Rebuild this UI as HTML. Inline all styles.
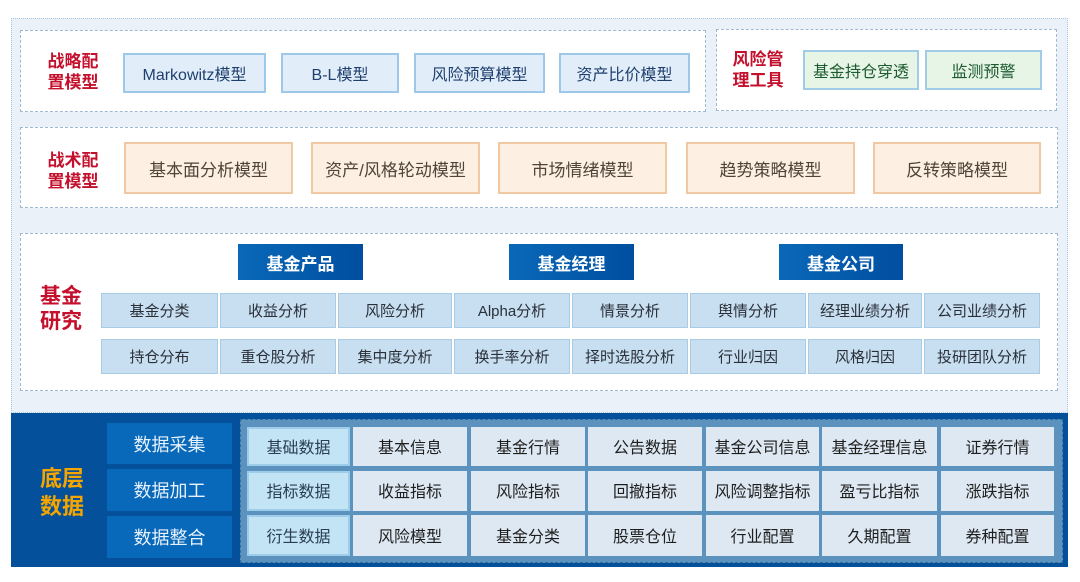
<!DOCTYPE html>
<html><head><meta charset="utf-8"><style>
*{box-sizing:border-box;margin:0;padding:0}
body{width:1080px;height:582px;background:#fff;position:relative;overflow:hidden;font-family:"Liberation Sans","Noto Sans CJK SC",sans-serif}
.a{position:absolute;display:flex;align-items:center;justify-content:center;text-align:center;white-space:nowrap}
.panel{position:absolute;left:11px;top:18px;width:1057px;height:395px;background:#eaf1f8;border:1px dotted #a9c6e0}
.box{position:absolute;background:#fff;border:1px dashed #9fb8d2}
.lbl{color:#c4102c;font-weight:bold;font-size:17px;line-height:21px}
.b1{background:#e1eef9;border:2px solid #9dc8ea;color:#1f3f6e;font-size:16px}
.g{background:#e6f5e6;border:2px solid #a0cce8;color:#1d5a30;font-size:16px}
.o{background:#fdf0e2;border:2px solid #f0c9a2;color:#4e443a;font-size:17px}
.h{background:linear-gradient(90deg,#0a68b8,#004ea0);color:#fff;font-weight:bold;font-size:17px}
.c{background:#c7dff1;border:1px solid #a8cbe6;color:#2a2f38;font-size:15px}
.dark{position:absolute;left:11px;top:413px;width:1057px;height:154px;background:#05509a}
.lb{background:#0868ba;color:#e8f2fc;font-size:18px}
.grid{position:absolute;left:240px;top:419px;width:823px;height:144px;background:#5b93be;border:1px dashed #2f6fa6}
.d{background:#dde8f2;color:#1e1e1e;font-size:16px;padding-bottom:2px}
.d1{background:#c2e4f5;color:#2a3d52;font-size:16px;border:2px solid #9dcde8;padding-bottom:2px}
</style></head><body>
<div class="panel"></div>
<div class="box" style="left:20px;top:30px;width:686px;height:82px"></div>
<div class="box" style="left:716px;top:29px;width:341px;height:82px"></div>
<div class="box" style="left:20px;top:127px;width:1038px;height:81px"></div>
<div class="box" style="left:20px;top:233px;width:1038px;height:158px"></div>

<div class="a lbl" style="left:40px;top:50px;width:66px;height:44px">战略配<br>置模型</div>
<div class="a b1" style="left:123px;top:53px;width:143px;height:40px">Markowitz模型</div>
<div class="a b1" style="left:281px;top:53px;width:118px;height:40px">B-L模型</div>
<div class="a b1" style="left:414px;top:53px;width:131px;height:40px">风险预算模型</div>
<div class="a b1" style="left:559px;top:53px;width:131px;height:40px">资产比价模型</div>

<div class="a lbl" style="left:727px;top:48px;width:62px;height:44px">风险管<br>理工具</div>
<div class="a g" style="left:803px;top:50px;width:116px;height:40px">基金持仓穿透</div>
<div class="a g" style="left:925px;top:50px;width:117px;height:40px">监测预警</div>

<div class="a lbl" style="left:40px;top:149px;width:66px;height:44px">战术配<br>置模型</div>
<div class="a o" style="left:124px;top:142px;width:169px;height:52px">基本面分析模型</div>
<div class="a o" style="left:311px;top:142px;width:169px;height:52px">资产/风格轮动模型</div>
<div class="a o" style="left:498px;top:142px;width:169px;height:52px">市场情绪模型</div>
<div class="a o" style="left:686px;top:142px;width:169px;height:52px">趋势策略模型</div>
<div class="a o" style="left:873px;top:142px;width:168px;height:52px">反转策略模型</div>

<div class="a lbl" style="left:34px;top:284px;width:54px;height:50px;font-size:21px;line-height:25px">基金<br>研究</div>
<div class="a h" style="left:238px;top:244px;width:125px;height:36px">基金产品</div>
<div class="a h" style="left:509px;top:244px;width:125px;height:36px">基金经理</div>
<div class="a h" style="left:779px;top:244px;width:124px;height:36px">基金公司</div>

<div class="a c" style="left:101px;top:293px;width:117px;height:35px">基金分类</div>
<div class="a c" style="left:220px;top:293px;width:116px;height:35px">收益分析</div>
<div class="a c" style="left:338px;top:293px;width:114px;height:35px">风险分析</div>
<div class="a c" style="left:454px;top:293px;width:116px;height:35px">Alpha分析</div>
<div class="a c" style="left:572px;top:293px;width:116px;height:35px">情景分析</div>
<div class="a c" style="left:690px;top:293px;width:116px;height:35px">舆情分析</div>
<div class="a c" style="left:808px;top:293px;width:114px;height:35px">经理业绩分析</div>
<div class="a c" style="left:924px;top:293px;width:116px;height:35px">公司业绩分析</div>
<div class="a c" style="left:101px;top:339px;width:117px;height:35px">持仓分布</div>
<div class="a c" style="left:220px;top:339px;width:116px;height:35px">重仓股分析</div>
<div class="a c" style="left:338px;top:339px;width:114px;height:35px">集中度分析</div>
<div class="a c" style="left:454px;top:339px;width:116px;height:35px">换手率分析</div>
<div class="a c" style="left:572px;top:339px;width:116px;height:35px">择时选股分析</div>
<div class="a c" style="left:690px;top:339px;width:116px;height:35px">行业归因</div>
<div class="a c" style="left:808px;top:339px;width:114px;height:35px">风格归因</div>
<div class="a c" style="left:924px;top:339px;width:116px;height:35px">投研团队分析</div>

<div class="dark"></div>
<div class="a" style="left:34px;top:464px;width:56px;height:58px;color:#f5a500;font-weight:bold;font-size:22px;line-height:28px">底层<br>数据</div>
<div class="a lb" style="left:107px;top:423px;width:125px;height:41px">数据采集</div>
<div class="a lb" style="left:107px;top:469px;width:125px;height:42px">数据加工</div>
<div class="a lb" style="left:107px;top:516px;width:125px;height:42px">数据整合</div>
<div class="grid"></div>

<div class="a d1" style="left:247px;top:427px;width:103px;height:39px">基础数据</div>
<div class="a d" style="left:353px;top:427px;width:114px;height:39px">基本信息</div>
<div class="a d" style="left:471px;top:427px;width:114px;height:39px">基金行情</div>
<div class="a d" style="left:588px;top:427px;width:114px;height:39px">公告数据</div>
<div class="a d" style="left:706px;top:427px;width:113px;height:39px">基金公司信息</div>
<div class="a d" style="left:822px;top:427px;width:115px;height:39px">基金经理信息</div>
<div class="a d" style="left:941px;top:427px;width:113px;height:39px">证券行情</div>

<div class="a d1" style="left:247px;top:471px;width:103px;height:40px">指标数据</div>
<div class="a d" style="left:353px;top:471px;width:114px;height:40px">收益指标</div>
<div class="a d" style="left:471px;top:471px;width:114px;height:40px">风险指标</div>
<div class="a d" style="left:588px;top:471px;width:114px;height:40px">回撤指标</div>
<div class="a d" style="left:706px;top:471px;width:113px;height:40px">风险调整指标</div>
<div class="a d" style="left:822px;top:471px;width:115px;height:40px">盈亏比指标</div>
<div class="a d" style="left:941px;top:471px;width:113px;height:40px">涨跌指标</div>

<div class="a d1" style="left:247px;top:515px;width:103px;height:41px">衍生数据</div>
<div class="a d" style="left:353px;top:515px;width:114px;height:41px">风险模型</div>
<div class="a d" style="left:471px;top:515px;width:114px;height:41px">基金分类</div>
<div class="a d" style="left:588px;top:515px;width:114px;height:41px">股票仓位</div>
<div class="a d" style="left:706px;top:515px;width:113px;height:41px">行业配置</div>
<div class="a d" style="left:822px;top:515px;width:115px;height:41px">久期配置</div>
<div class="a d" style="left:941px;top:515px;width:113px;height:41px">券种配置</div>
</body></html>
